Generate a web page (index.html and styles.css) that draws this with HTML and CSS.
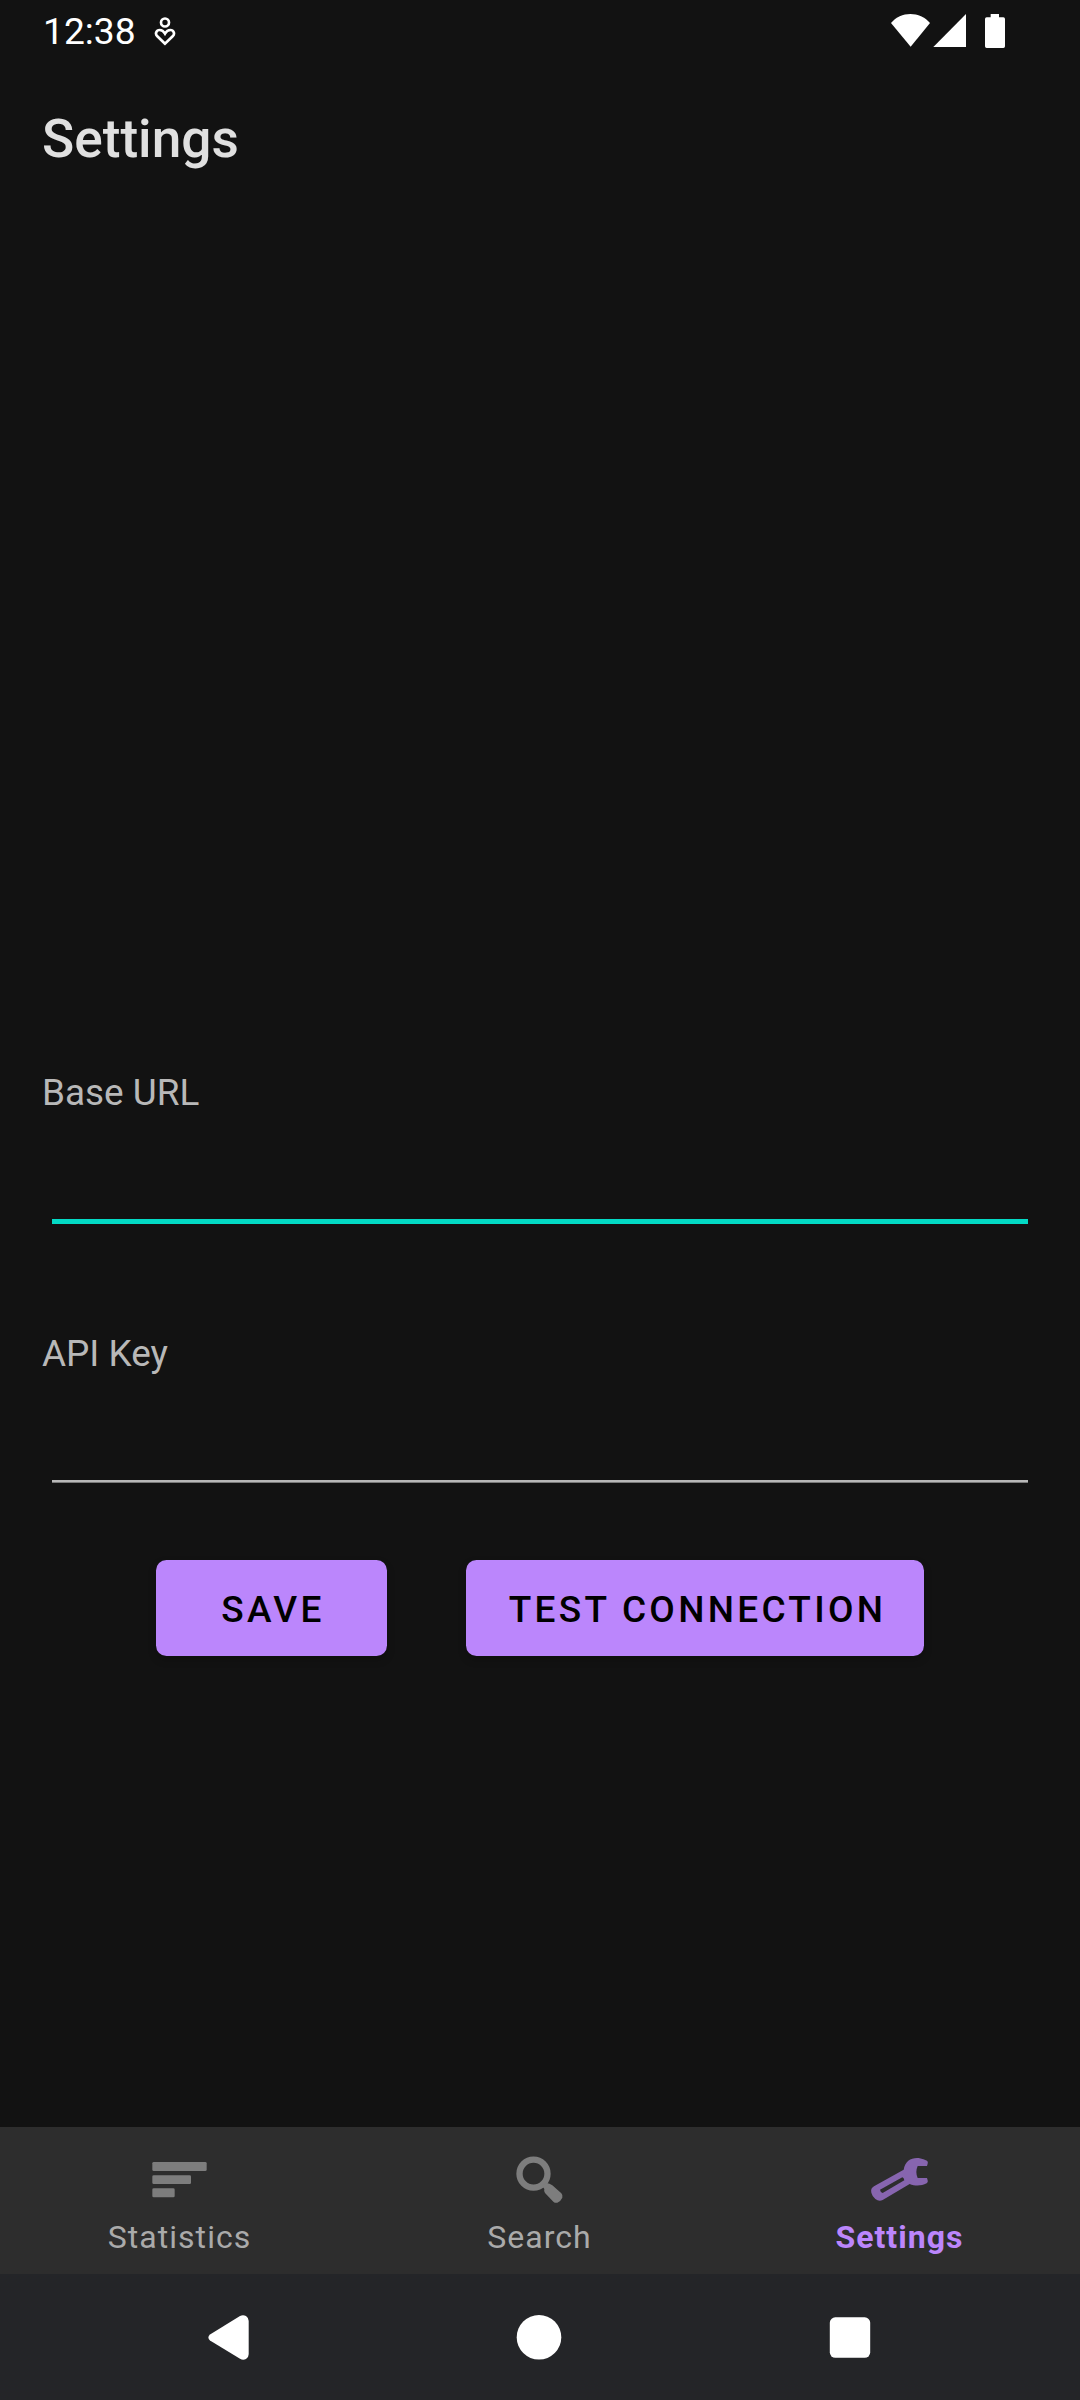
FILE: index.html
```html
<!DOCTYPE html>
<html lang="en">
<head>
<meta charset="utf-8">
<title>Settings</title>
<link rel="stylesheet" href="styles.css">
</head>
<body>
<div class="screen">
  <header class="status-bar">
    <span class="clock">12:38</span>
    <svg class="notice" width="22" height="30" viewBox="462 51 66 90" fill="none" stroke="#fff" stroke-width="8">
      <circle cx="495" cy="67.500" r="12"/>
      <path d="M495 131 L472 109 C464 101 469 90 479 90 C487 90 491 94 495 101 C499 94 503 90 511 90 C521 90 526 101 518 109 Z"/>
    </svg>
    <div class="status-icons">
      <svg width="40" height="36" viewBox="90 39 120 108"><path fill="#fff" d="M152 140 L93 69 C122 33 180 33 210 69 Z"/></svg>
      <svg width="34" height="36" viewBox="219 39 102 108"><path fill="#fff" d="M220 141 L318 42 V141 Z"/></svg>
      <svg class="battery" width="22" height="36" viewBox="372 39 66 108"><path fill="#fff" d="M392 42 H417 V52 H430 Q435 52 435 57 V139 Q435 144 430 144 H380 Q375 144 375 139 V57 Q375 52 380 52 H392 Z"/></svg>
    </div>
  </header>
  <h1 class="title">Settings</h1>
  <main class="form">
    <label class="field">
      <span class="field-label">Base URL</span>
      <input class="field-input active" type="text">
    </label>
    <label class="field">
      <span class="field-label">API Key</span>
      <input class="field-input" type="text">
    </label>
    <div class="actions">
      <button class="button save">SAVE</button>
      <button class="button test">TEST CONNECTION</button>
    </div>
  </main>
  <nav class="tabs">
    <a class="tab">
      <svg class="tab-icon" viewBox="174 114 192 192"><g fill="#7d7d7d"><rect x="187" y="156" width="163" height="27" rx="4"/><rect x="187" y="196" width="116" height="26" rx="4"/><rect x="187" y="235" width="67" height="27" rx="4"/></g></svg>
      <span>Statistics</span>
    </a>
    <a class="tab">
      <svg class="tab-icon" viewBox="174 114 192 192"><circle cx="250.500" cy="191" r="42" fill="none" stroke="#7d7d7d" stroke-width="19"/><path fill="#7d7d7d" d="M276 227 L287 218 Q300 220 307 226 L334 250 Q340 257 337 263 Q332 274 322 278 Q316 280 310 275 L285 249 Q281 243 283 237 Z"/></svg>
      <span>Search</span>
    </a>
    <a class="tab selected">
      <svg class="tab-icon" viewBox="204 114 192 192"><path fill="#8765af" fill-rule="evenodd" d="M311 179 C315 153 334 142 356 144 Q372 147 381 152 Q385 155 383 161 L381 168 H353 Q345 186 353 204 H381 L383 211 Q385 217 380 220 C364 228 346 229 329 222 L248 270 Q237 276 226 267 Q217 260 214 248 Q211 235 222 229 Z M240 239 L307 202 Q312 203 313 211 L248 249 Q241 247 240 239 Z"/></svg>
      <span>Settings</span>
    </a>
  </nav>
  <footer class="system-nav">
    <svg width="48" height="48" viewBox="205 2313 48 48"><path fill="#fff" d="M210 2334.500 L240 2316 Q243 2314.500 246 2316 Q248.700 2317.800 248.700 2321 V2354 Q248.700 2357.500 246 2359 Q243 2360.500 240 2358.700 L210 2340.500 Q206.700 2337.500 210 2334.500 Z"/></svg>
    <svg width="48" height="48" viewBox="515.500 2313 48 48"><circle cx="539.500" cy="2337.300" r="22.300" fill="#fff"/></svg>
    <svg width="48" height="48" viewBox="825.500 2313 48 48"><rect x="829.300" y="2317.300" width="40.400" height="40.500" rx="5.500" fill="#fff"/></svg>
  </footer>
</div>
</body>
</html>
```
FILE: styles.css
```css
* { box-sizing: border-box; }
body { margin: 0; background: #121212; font-family: Roboto, sans-serif; }
.screen { width: 1080px; height: 2400px; display: flex; flex-direction: column; background: #121212; overflow: hidden; }
svg { display: block; flex: none; }

.status-bar { height: 63px; padding: 0 74px 0 43px; display: flex; align-items: flex-start; }
.clock { width: 111px; line-height: 63px; font-size: 37.2px; color: #fff; white-space: nowrap; }
.notice { margin-top: 17px; }
.status-icons { margin: 13px 0 0 auto; display: flex; gap: 3px; }
.battery { margin-left: 14px; }

.title { margin: 0; padding: 0 42px; height: 152px; font-size: 53.2px; font-weight: 500; line-height: 152px; color: #e0e0e0; }

.form { flex: 1; padding: 855px 42px 0; }
.field { display: block; height: 261px; }
.field-label { display: block; height: 44px; line-height: 46px; font-size: 36.9px; color: #b8b8b8; }
.field-input { display: block; width: 976px; height: 110px; margin: 0 10px; padding: 0; border: 0; border-radius: 0; outline: 0; background: linear-gradient(#b8b8b8, #b8b8b8) 0 105px / 100% 2px no-repeat, linear-gradient(#7a7a7a, #7a7a7a) 0 107px / 100% 1px no-repeat; color: #fff; font: inherit; font-size: 47px; }
.field-input.active { background: linear-gradient(#03dac5, #03dac5) 0 105px / 100% 5px no-repeat; }

.actions { display: flex; gap: 79px; padding: 0 114px; margin-top: -32px; }
.button { height: 96px; padding: 2px 0 0 3px; border: 0; border-radius: 10.5px; background: #bb86fc; color: #000; font-family: Roboto, sans-serif; font-size: 37px; font-weight: 500; letter-spacing: 3.3px; white-space: nowrap; box-shadow: 0 4px 8px rgba(0, 0, 0, .2); }
.save { width: 231px; }
.test { width: 458px; padding-left: 5px; }

.tabs { height: 147px; display: grid; grid-template-columns: repeat(3, 1fr); background: #2d2d2d; }
.tab { display: flex; flex-direction: column; align-items: center; padding-top: 21px; font-size: 32px; line-height: 38px; letter-spacing: 1.05px; color: #aaa; }
.tab-icon { width: 64px; height: 64px; margin-bottom: 6px; }
.selected { color: #bb86fc; font-weight: 700; }
.tab span { margin-right: 1px; }

.system-nav { height: 126px; padding: 0 206.5px 0 205px; display: flex; align-items: center; justify-content: space-between; background: #242528; }
```
